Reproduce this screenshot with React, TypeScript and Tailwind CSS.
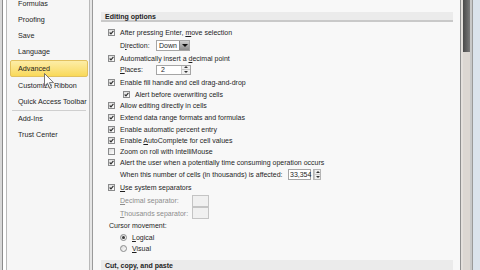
import React from "react";

function Check({ checked = true }: { checked?: boolean }) {
  return (
    <span className="flex h-[7px] w-[7px] shrink-0 items-center justify-center border border-[#8a8b8c] bg-linear-to-br from-[#dcdcdc] to-white">
      {checked && (
        <svg viewBox="0 0 6 6" className="h-[5px] w-[5px]">
          <path d="M0.8 3 L2.4 4.6 L5.3 1" stroke="#303030" strokeWidth="1.3" fill="none" />
        </svg>
      )}
    </span>
  );
}

function Radio({ checked }: { checked?: boolean }) {
  return (
    <span className="flex h-[7px] w-[7px] shrink-0 items-center justify-center rounded-full border border-[#8a8b8c] bg-linear-to-br from-[#d8d8d8] to-white">
      {checked && <span className="h-[3px] w-[3px] rounded-full bg-[#3a3a3a]" />}
    </span>
  );
}

function Spin() {
  return (
    <span className="flex h-full w-[9px] flex-col border-l border-[#c8c8c8] bg-[#f0f0f0]">
      <span className="flex flex-1 items-center justify-center border-b border-[#c8c8c8]">
        <span className="h-0 w-0 border-x-[2px] border-b-[2px] border-x-transparent border-b-[#333]" />
      </span>
      <span className="flex flex-1 items-center justify-center">
        <span className="h-0 w-0 border-x-[2px] border-t-[2px] border-x-transparent border-t-[#333]" />
      </span>
    </span>
  );
}

function CheckRow({ label, checked = true, className }: { label: React.ReactNode; checked?: boolean; className: string }) {
  return (
    <div className={`flex items-center gap-[5px] whitespace-nowrap ${className}`}>
      <Check checked={checked} />
      <span>{label}</span>
    </div>
  );
}

const navItems = ["Formulas", "Proofing", "Save", "Language"];

export default function App() {
  return (
    <div className="relative flex h-[270px] w-[480px] overflow-hidden bg-[#f4f4f4] font-['Liberation_Sans',Arial,sans-serif] text-[7px] leading-none text-[#1e1e1e]">
      {/* left navigation */}
      <div className="flex h-full w-[93px] shrink-0 border-l-[2px] border-l-[#d8d8d8]">
        <div className="h-full w-[1px] bg-[#8c8c8c]" />
        <div className="h-full w-[3px] bg-white" />
        <div className="flex h-full flex-1 flex-col border-l border-r border-[#b9b9b9] bg-[#f6f6f6] pl-[3px] pr-[1px] text-[7.2px] whitespace-nowrap">
          <div className="-mt-[4px] flex flex-col">
            {navItems.map((n) => (
              <div key={n} className="flex h-[16px] items-center pl-[8px]">
                {n}
              </div>
            ))}
            <div className="flex h-[17px] items-center rounded-[2px] border border-[#e2c15f] bg-linear-to-b from-[#fdeda6] to-[#f9d957] pl-[7px]">
              Advanced
            </div>
            <div className="flex h-[17px] items-center pl-[8px]">Customize Ribbon</div>
            <div className="flex h-[16px] items-center pl-[8px]">Quick Access Toolbar</div>
            <div className="mx-[2px] h-[1px] bg-[#cfcfcf]" />
            <div className="flex h-[16px] items-center pl-[8px]">Add-Ins</div>
            <div className="flex h-[15px] items-center pl-[8px]">Trust Center</div>
          </div>
        </div>
        <div className="h-full w-[2px] bg-[#e6e6e6]" />
        <div className="h-full w-[1px] bg-[#9a9a9a]" />
      </div>

      {/* options content */}
      <div className="flex h-full flex-1 flex-col bg-[#f8f8f8] pl-[8px] pr-[7px]">
        <div className="mt-[12px] flex h-[12px] items-center border-b-[2px] border-[#c9c9c9] bg-[#ebebeb] pl-[4px] font-bold">
          Editing options
        </div>
        <div className="flex flex-col pl-[7px] pt-[4px]">
          <CheckRow
            className="h-[12px]"
            label={<>After pressing Enter, <span className="underline">m</span>ove selection</>}
          />
          <div className="flex h-[14px] items-center pl-[12px]">
            <span className="w-[36px]">D<span className="underline">i</span>rection:</span>
            <span className="flex h-[11px] w-[34px] items-center border border-[#a5a5a5] bg-white">
              <span className="flex-1 pl-[2px]">Down</span>
              <span className="flex h-full w-[10px] items-center justify-center border-l border-[#8a8a8a] bg-linear-to-b from-[#cfcfcf] to-[#8c8c8c]">
                <span className="h-0 w-0 border-x-[3px] border-t-[3px] border-x-transparent border-t-[#111]" />
              </span>
            </span>
          </div>
          <CheckRow
            className="h-[12px]"
            label={<>Automatically insert a <span className="underline">d</span>ecimal point</>}
          />
          <div className="flex h-[11px] items-center pl-[12px]">
            <span className="w-[36px]"><span className="underline">P</span>laces:</span>
            <span className="flex h-[10px] w-[35px] items-center border border-[#a5a5a5] bg-white">
              <span className="flex-1 pl-[4px]">2</span>
              <Spin />
            </span>
          </div>
          <CheckRow className="h-[14px]" label="Enable fill handle and cell drag-and-drop" />
          <CheckRow className="h-[10px] pl-[15px]" label="Alert before overwriting cells" />
          <CheckRow className="h-[12px]" label="Allow editing directly in cells" />
          <CheckRow className="h-[12px]" label="Extend data range formats and formulas" />
          <CheckRow className="h-[12px]" label="Enable automatic percent entry" />
          <CheckRow
            className="h-[11px]"
            label={<>Enable <span className="underline">A</span>utoComplete for cell values</>}
          />
          <CheckRow checked={false} className="h-[11px]" label="Zoom on roll with IntelliMouse" />
          <CheckRow className="h-[11px]" label="Alert the user when a potentially time consuming operation occurs" />
          <div className="flex h-[13px] items-center whitespace-nowrap pl-[12px]">
            <span className="w-[168px]">When this number of cells (in thousands) is affected:</span>
            <span className="flex h-[11px] w-[23px] items-center border border-[#a5a5a5] bg-white pl-[1px]">33,354</span>
            <span className="ml-[2px] flex h-[11px] w-[8px] border border-[#b5b5b5]">
              <Spin />
            </span>
          </div>
          <CheckRow
            className="h-[13px]"
            label={<><span className="underline">U</span>se system separators</>}
          />
          <div className="flex h-[13px] items-center whitespace-nowrap pl-[12px] text-[#8d8d8d]">
            <span className="w-[72px]"><span className="underline">D</span>ecimal separator:</span>
            <span className="h-[12px] w-[17px] border border-[#c4c4c4] bg-[#f0f0f0]" />
          </div>
          <div className="flex h-[12px] items-center whitespace-nowrap pl-[12px] text-[#8d8d8d]">
            <span className="w-[72px]"><span className="underline">T</span>housands separator:</span>
            <span className="h-[12px] w-[17px] border border-[#c4c4c4] bg-[#f0f0f0]" />
          </div>
          <div className="flex h-[13px] items-center pl-[1px]">Cursor movement:</div>
          <div className="flex h-[11px] items-center gap-[5px] pl-[12px]">
            <Radio checked />
            <span><span className="underline">L</span>ogical</span>
          </div>
          <div className="flex h-[11px] items-center gap-[5px] pl-[12px]">
            <Radio />
            <span><span className="underline">V</span>isual</span>
          </div>
        </div>
        <div className="mt-[6px] flex h-[12px] items-center bg-[#ebebeb] pl-[4px] font-bold">
          Cut, copy, and paste
        </div>
      </div>

      {/* scrollbar and window edge */}
      <div className="flex h-full w-[20px] shrink-0">
        <div className="h-full w-[1px] bg-[#8f8f8f]" />
        <div className="h-full w-[2px] bg-[#e4e0dc]" />
        <div className="flex h-full w-[7px] flex-col bg-[#dcd7d2]">
          <div className="h-[52px] bg-linear-to-r from-[#4a4a4a] to-[#7a7a7a]" />
        </div>
        <div className="h-full w-[2px] bg-[#c8c8c8]" />
        <div className="h-full w-[1px] bg-[#9a9a9a]" />
        <div className="h-full flex-1 bg-[#dbe3ec]" />
      </div>

      {/* mouse pointer */}
      <svg className="absolute left-[44px] top-[73px] h-[17px] w-[11px]" viewBox="0 0 11 17">
        <path d="M0.5 0.5 L0.5 13 L3.5 10.2 L5.8 15.5 L7.6 14.7 L5.4 9.6 L9.5 9.6 Z" fill="white" stroke="#555" strokeWidth="0.8" />
      </svg>
    </div>
  );
}
